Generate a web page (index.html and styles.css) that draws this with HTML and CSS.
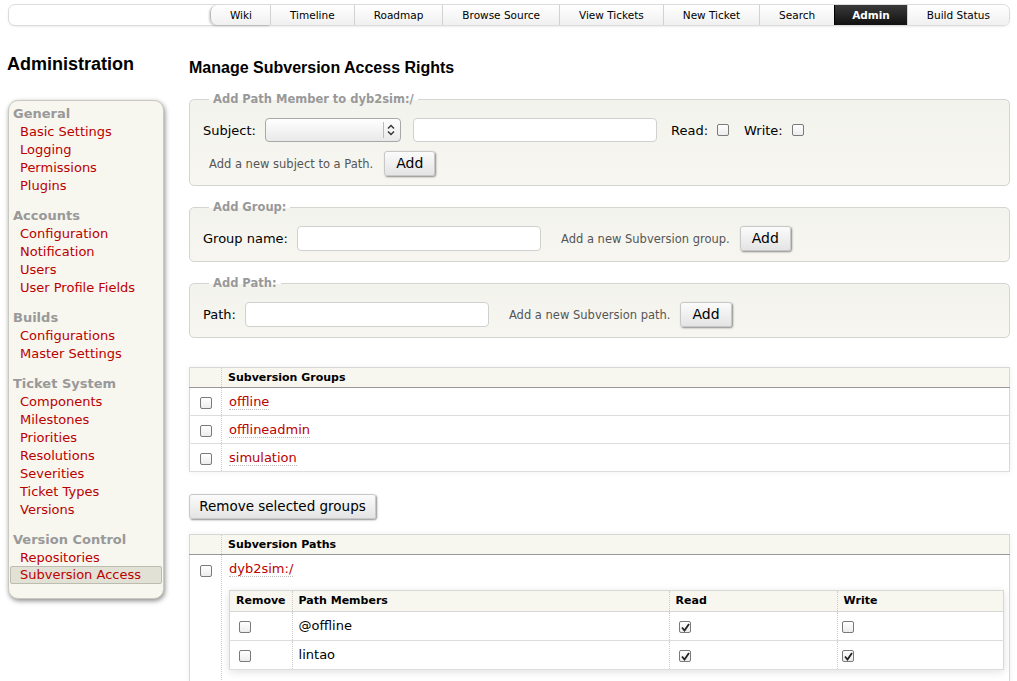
FILE: index.html
```html
<!DOCTYPE html>
<html>
<head>
<meta charset="utf-8">
<title>Manage Subversion Access Rights</title>
<link rel="stylesheet" href="styles.css">
</head>
<body>
<div class="nav">
  <ul class="menu">
    <li class="first">Wiki</li>
    <li>Timeline</li>
    <li>Roadmap</li>
    <li>Browse Source</li>
    <li>View Tickets</li>
    <li>New Ticket</li>
    <li>Search</li>
    <li class="active">Admin</li>
    <li class="last">Build Status</li>
  </ul>
</div>
<div class="page">
  <div class="side">
    <h1>Administration</h1>
    <div class="panel">
      <div class="sec first">General</div>
      <a>Basic Settings</a>
      <a>Logging</a>
      <a>Permissions</a>
      <a>Plugins</a>
      <div class="sec">Accounts</div>
      <a>Configuration</a>
      <a>Notification</a>
      <a>Users</a>
      <a>User Profile Fields</a>
      <div class="sec">Builds</div>
      <a>Configurations</a>
      <a>Master Settings</a>
      <div class="sec">Ticket System</div>
      <a>Components</a>
      <a>Milestones</a>
      <a>Priorities</a>
      <a>Resolutions</a>
      <a>Severities</a>
      <a>Ticket Types</a>
      <a>Versions</a>
      <div class="sec">Version Control</div>
      <a>Repositories</a>
      <a class="sel">Subversion Access</a>
    </div>
  </div>
  <div class="content">
    <h2>Manage Subversion Access Rights</h2>
    <fieldset class="fs1">
      <legend>Add Path Member to dyb2sim:/</legend>
      <div class="row">
        <span class="lbl">Subject:</span>
        <span class="select"><span class="sep"></span><svg class="arrows" width="8" height="12" viewBox="0 0 8 12"><path d="M1 4.5 L4 1.5 L7 4.5 M1 7.5 L4 10.5 L7 7.5" fill="none" stroke="#333" stroke-width="1.4"/></svg></span>
        <span class="input subj"></span>
        <span class="lbl rd">Read:</span><span class="cb"></span>
        <span class="lbl wr">Write:</span><span class="cb"></span>
      </div>
      <div class="row row2">
        <span class="hint">Add a new subject to a Path.</span>
        <span class="btn">Add</span>
      </div>
    </fieldset>
    <fieldset>
      <legend>Add Group:</legend>
      <div class="row">
        <span class="lbl">Group name:</span>
        <span class="input"></span>
        <span class="hint gap">Add a new Subversion group.</span>
        <span class="btn">Add</span>
      </div>
    </fieldset>
    <fieldset>
      <legend>Add Path:</legend>
      <div class="row">
        <span class="lbl">Path:</span>
        <span class="input"></span>
        <span class="hint gap">Add a new Subversion path.</span>
        <span class="btn">Add</span>
      </div>
    </fieldset>

    <table class="list groups">
      <thead><tr><th class="sel-col"></th><th>Subversion Groups</th></tr></thead>
      <tbody>
        <tr><td class="sel-col"><span class="cb"></span></td><td><a class="lnk">offline</a></td></tr>
        <tr><td class="sel-col"><span class="cb"></span></td><td><a class="lnk">offlineadmin</a></td></tr>
        <tr><td class="sel-col"><span class="cb"></span></td><td><a class="lnk">simulation</a></td></tr>
      </tbody>
    </table>

    <span class="btn remove">Remove selected groups</span>

    <table class="list paths">
      <thead><tr><th class="sel-col"></th><th>Subversion Paths</th></tr></thead>
      <tbody>
        <tr>
          <td class="sel-col top"><span class="cb"></span></td>
          <td class="pathcell">
            <a class="lnk">dyb2sim:/</a>
            <table class="members">
              <thead><tr><th class="c-rm">Remove</th><th class="c-pm">Path Members</th><th class="c-rd">Read</th><th class="c-wr">Write</th></tr></thead>
              <tbody>
                <tr><td><span class="cb"></span></td><td>@offline</td><td><span class="cb on"><svg width="11" height="11" viewBox="0 0 11 11"><path d="M2 5.5 L4.5 8.5 L9 2" fill="none" stroke="#222" stroke-width="1.8"/></svg></span></td><td><span class="cb"></span></td></tr>
                <tr><td><span class="cb"></span></td><td>lintao</td><td><span class="cb on"><svg width="11" height="11" viewBox="0 0 11 11"><path d="M2 5.5 L4.5 8.5 L9 2" fill="none" stroke="#222" stroke-width="1.8"/></svg></span></td><td><span class="cb on"><svg width="11" height="11" viewBox="0 0 11 11"><path d="M2 5.5 L4.5 8.5 L9 2" fill="none" stroke="#222" stroke-width="1.8"/></svg></span></td></tr>
              </tbody>
            </table>
          </td>
        </tr>
      </tbody>
    </table>
  </div>
</div>
</body>
</html>
```

FILE: styles.css
```css
html, body { margin: 0; padding: 0; background: #fff; }
body {
  font-family: "DejaVu Sans", Verdana, sans-serif;
  font-size: 13px;
  color: #000;
  overflow: hidden;
}

/* top navigation */
.nav {
  margin: 4px 7px 0 8px;
  height: 20px;
  border: 1px solid #dcdcdc;
  border-radius: 7px;
  background: #fff;
  display: flex;
  justify-content: flex-end;
  box-shadow: 0 1px 2px rgba(0,0,0,0.08);
}
.menu {
  list-style: none;
  margin: 0;
  padding: 0;
  display: flex;
  height: 20px;
}
.menu li {
  font-size: 10.5px;
  line-height: 20px;
  padding: 0 19px;
  white-space: nowrap;
  background: linear-gradient(#ffffff, #f0f0f0);
  border-left: 1px solid #d2d2d2;
}
.menu li.first {
  border-left: 1px solid #bbb;
  border-radius: 7px 0 0 7px;
  box-shadow: -1px 1px 2px rgba(0,0,0,0.2);
  padding: 0 18px 0 19px;
}
.menu li.last { border-radius: 0 7px 7px 0; }
.menu li.active {
  background: linear-gradient(#3a3a3a, #111);
  color: #fff;
  font-weight: bold;
  padding: 0 17px;
  border-left-color: #000;
}

/* page */
.page {
  display: flex;
  gap: 25px;
  padding: 0 7px 0 8px;
}
.side { width: 156px; flex: none; }
.side h1 {
  font-family: "Liberation Sans", Arial, sans-serif;
  font-size: 18px;
  line-height: 22px;
  font-weight: bold;
  margin: 27px 0 25px -1px;
}
.panel {
  background: #f7f6ef;
  border: 1px solid #c9c9c0;
  border-radius: 10px;
  box-shadow: 1px 2px 5px rgba(0,0,0,0.45);
  padding: 4px 0 14px;
}
.panel .sec {
  color: #999;
  font-weight: bold;
  line-height: 18px;
  padding-left: 4px;
  margin-top: 12px;
}
.panel .sec.first { margin-top: 0; }
.panel a {
  display: block;
  color: #b00;
  line-height: 18px;
  padding-left: 11px;
  text-decoration: none;
}
.panel a.sel {
  margin: -1px 1px 0;
  padding-left: 9px;
  line-height: 16px;
  background: #e2e1d5;
  border: 1px solid #bdbcb0;
  border-radius: 2px;
}

/* content */
.content { flex: 1; min-width: 0; }
.content h2 {
  font-family: "Liberation Sans", Arial, sans-serif;
  font-size: 16px;
  line-height: 20px;
  font-weight: bold;
  margin: 32px 0 14px;
}
fieldset {
  margin: 0 0 14px;
  padding: 12px 13px 10px;
  border: 1px solid #d5d5d0;
  border-radius: 5px;
  background: linear-gradient(#f3f3ee, #f7f6f0);
  min-width: 0;
}
fieldset.fs1 { padding-bottom: 9px; }
legend {
  font-size: 11.5px;
  line-height: 14px;
  font-weight: bold;
  color: #999;
  padding: 0 4px;
  margin-left: 6px;
}
.row {
  display: flex;
  align-items: center;
  height: 25px;
}
.fs1 .row { height: 24px; }
.fs1 .row2 { height: 25px; margin-top: 9px; }
.lbl { white-space: nowrap; margin-right: 9px; }
.lbl.rd { margin-left: 14px; }
.lbl.wr { margin-left: 15px; }
.select {
  position: relative;
  display: inline-block;
  width: 134px;
  height: 22px;
  border: 1px solid #a8a8a8;
  border-radius: 4px;
  background: linear-gradient(#ffffff, #e9e9e9);
}
.select .sep {
  position: absolute;
  right: 16px;
  top: 3px;
  bottom: 3px;
  border-left: 1px solid #bbb;
}
.select .arrows { position: absolute; right: 5px; top: 5px; }
.input {
  display: inline-block;
  width: 242px;
  height: 23px;
  border: 1px solid #d0d0d0;
  border-radius: 4px;
  background: #fff;
  box-sizing: content-box;
}
.input.subj { margin-left: 12px; height: 22px; }
.hint {
  font-size: 11.5px;
  color: #555;
  white-space: nowrap;
  margin-left: 6px;
  margin-right: 11px;
}
.hint.gap { margin-left: 20px; margin-right: 10px; }
.btn {
  display: inline-block;
  box-sizing: border-box;
  height: 25px;
  line-height: 23px;
  padding: 0 11px;
  font-size: 14px;
  border: 1px solid #c8c8c8;
  border-radius: 3px;
  background: linear-gradient(#fbfbfb, #e4e4e4);
  box-shadow: 1px 1px 2px rgba(0,0,0,0.45);
  white-space: nowrap;
}
.btn.remove {
  display: block;
  width: 187px;
  font-size: 13.5px;
  padding: 0;
  text-align: center;
  margin: 22px 0 15px;
}

.cb {
  display: inline-block;
  box-sizing: border-box;
  width: 12px;
  height: 12px;
  border: 1px solid #7a7a7a;
  border-radius: 2px;
  background: linear-gradient(#ffffff, #ececec);
  vertical-align: middle;
  position: relative;
}
.cb svg { position: absolute; left: 0; top: 0; }

/* tables */
table.list {
  width: 100%;
  border-collapse: collapse;
  border: 1px solid #d7d7d7;
  box-shadow: 0 0 6px rgba(0,0,0,0.06);
}
table.list.groups { margin-top: 29px; }
table.list th {
  background: #f7f6ef;
  border-bottom: 1px solid #999;
  text-align: left;
  font-size: 11px;
  font-weight: bold;
  height: 19px;
  padding: 0 6px;
}
table.list > tbody > tr > td {
  border-bottom: 1px solid #ddd;
  height: 27px;
  padding: 0 7px;
}
table.list .sel-col {
  width: 21px;
  padding: 0 0 0 10px;
  border-right: 1px dotted #ccc;
}
table.list td.sel-col { padding-left: 10px; }
table.list td.sel-col.top { vertical-align: top; padding-top: 7px; }
.lnk {
  color: #b00;
  text-decoration: none;
  border-bottom: 1px dotted #bbb;
}
td.pathcell {
  vertical-align: top;
  padding: 5px 5px 12px 7px !important;
  line-height: 18px;
}
table.members {
  margin-top: 12px;
  width: 100%;
  border-collapse: collapse;
  border: 1px solid #d7d7d7;
  box-shadow: 0 2px 8px rgba(0,0,0,0.12);
}
table.members th {
  background: #f7f6ef;
  border-bottom: 1px solid #d7d7d7;
  border-right: 1px dotted #ccc;
  text-align: left;
  font-size: 11px;
  font-weight: bold;
  height: 20px;
  padding: 0 6px;
}
table.members td {
  border-bottom: 1px solid #ddd;
  border-right: 1px dotted #ccc;
  height: 28px;
  padding: 0 9px;
}
table.members td:first-child { padding-left: 9px; }
table.members td:nth-child(2) { padding-left: 6px; }
table.members td:nth-child(4) { padding-left: 4px; }
.c-rm { width: 49px; }
.c-pm { width: 364px; }
.c-rd { width: 155px; }
```
